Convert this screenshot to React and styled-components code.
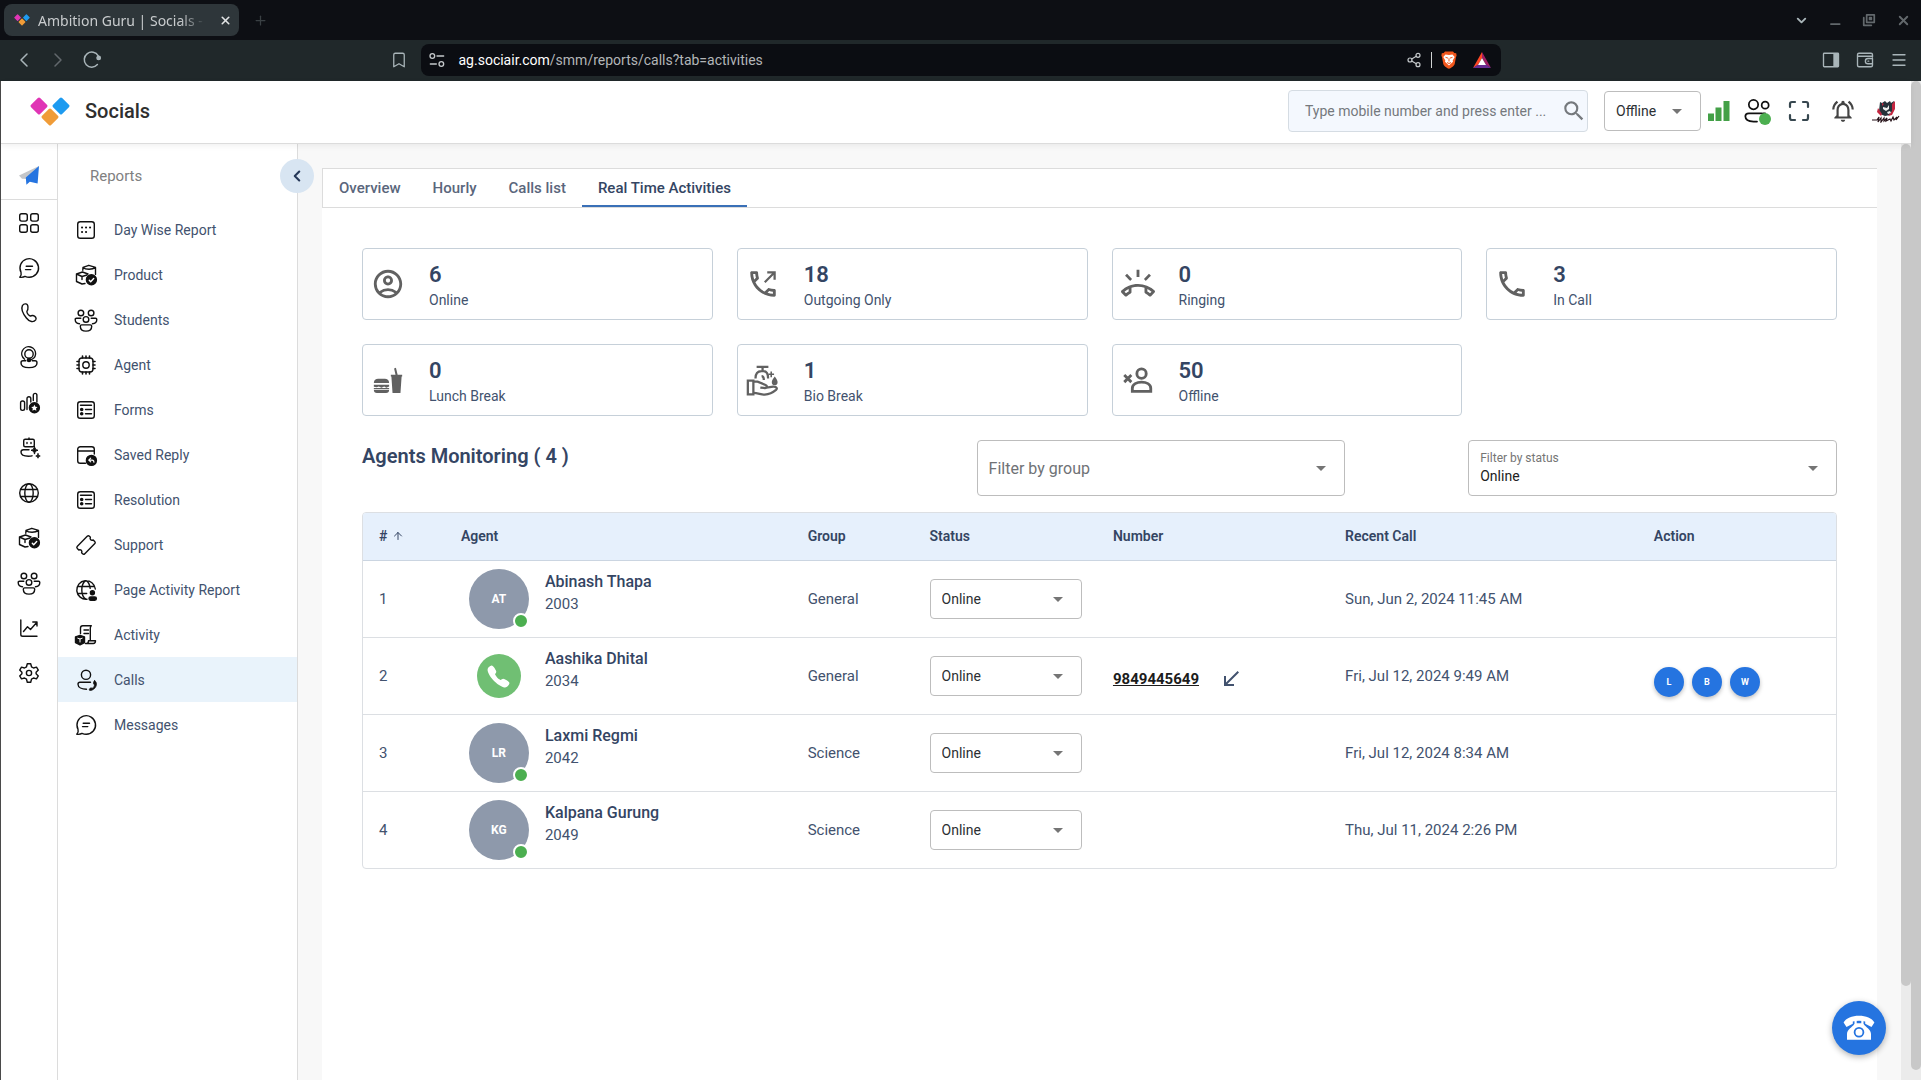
import React from "react";
import styled, { createGlobalStyle, css } from "styled-components";
import {
  MdArrowDropDown,
  MdSearch,
  MdOutlineAccountCircle,
  MdOutlineRingVolume,
  MdOutlinePhone,
  MdOutlineNotificationsActive,
  MdCallReceived,
} from "react-icons/md";
import { IoCall } from "react-icons/io5";
import {
  ChevronLeft,
  ChevronRight,
  ChevronDown,
  Bookmark,
  Share2,
  Menu,
  Plus,
  X,
  Maximize,
  ArrowUp,
} from "lucide-react";

const Line = ({ size = 24, width = 1.4, children }) => (
  <svg
    width={size}
    height={size}
    viewBox="0 0 24 24"
    fill="none"
    stroke="currentColor"
    strokeWidth={width}
    strokeLinecap="round"
    strokeLinejoin="round"
    aria-hidden="true"
  >
    {children}
  </svg>
);

const Logo = ({ width }) => (
  <svg width={width} viewBox="0 0 40 29" aria-hidden="true">
    <rect x="2.6" y="2.6" width="12.8" height="12.8" rx="1.6" fill="#e035b5" transform="rotate(45 9 9)" />
    <rect x="24.6" y="2.6" width="12.8" height="12.8" rx="1.6" fill="#1e9bf0" transform="rotate(45 31 9)" />
    <rect x="13.6" y="13.6" width="12.8" height="12.8" rx="1.6" fill="#f09c38" transform="rotate(45 20 20)" />
  </svg>
);

const PlaneIcon = () => (
  <svg width="24" height="24" viewBox="0 0 24 24" aria-hidden="true">
    <path d="M22 2 2 11.5l3 3.2 5.5.3z" fill="#c4c6c9" />
    <path d="M22 2 8.8 13.6l.6 7.2 3.4-3 7.8 1.6z" fill="#2574e0" />
  </svg>
);

const GridIcon = () => (
  <Line>
    <rect x="2.7" y="2.7" width="7.6" height="7.4" rx="2" />
    <rect x="13.7" y="2.7" width="7.6" height="7.4" rx="2" />
    <rect x="2.7" y="13.7" width="7.6" height="7.6" rx="2" />
    <rect x="13.7" y="13.7" width="7.6" height="7.6" rx="2" />
  </Line>
);

const ChatIcon = () => (
  <Line>
    <path d="M12.2 21.3a9.3 9.3 0 1 0-8.2-5c.5 1.6.2 3.3-1.2 5 2.6.2 4.4-.3 5.2-.9 1.4.6 2.7.9 4.2.9z" />
    <path d="M9.2 10.2h6.3M8.5 13.6h5.3" />
  </Line>
);

const PhoneIcon = () => (
  <Line>
    <path d="M5.4 4.6c1.7-2.5 5.3-2.3 5.5.9.1 2.2.3 3.2-.7 4.200-1 1.200.6 3.900 2.300 5 1.200.8 1.900-.5 3.400-.2 2.500.6 3.900 2.600 2.800 4.300-2 2.900-6.300 2.200-9.300-1.800C6 12.700 3.700 8.200 5.400 4.600z" />
  </Line>
);

const SupportAgentIcon = () => (
  <Line>
    <circle cx="12" cy="8" r="4.2" />
    <path d="M7.6 13.2a6.900 6.900 0 1 1 10.900-4.700c-.3 2.600-2.100 4.600-5 5.200" />
    <circle cx="12" cy="14" r="1.6" fill="currentColor" />
    <path d="M8.8 14.8H6c-1.300 0-2 .8-2 2.100 0 2.900 3.300 4.700 8 4.700s8-1.800 8-4.700c0-1.300-.7-2.100-2-2.100h-2.800" />
  </Line>
);

const StatsStarIcon = () => (
  <Line>
    <rect x="3.6" y="10" width="4" height="9.4" rx="1.8" />
    <path d="M10 18.5V7.6a1.900 1.900 0 0 1 3.800 0V11M16.300 9.500V4.200a1.800 1.800 0 0 1 3.600 0V11" />
    <circle cx="17.4" cy="16.8" r="5" fill="currentColor" />
    <path d="m17.4 13.8 1 2 2.200.3-1.600 1.500.4 2.200-2-1-2 1 .4-2.200-1.600-1.500 2.200-.3z" fill="#fff" stroke="none" />
  </Line>
);

const RobotIcon = () => (
  <Line>
    <path d="M12 2v1.500" />
    <rect x="6.7" y="3.2" width="10.6" height="7.6" rx="1.5" />
    <path d="M10 6.500v1M14 6.500v1" />
    <path d="M12 13.700H6.500c-1.600 0-2.500.9-2.500 2.300 0 2.600 3 4.200 7.500 4.200 1.200 0 2.500-.1 3.500-.4" />
    <path d="M17.500 10.500c.5 2.500 1.300 3.300 3.500 3.800-2.200.5-3 1.300-3.500 3.800-.5-2.500-1.300-3.300-3.500-3.800 2.200-.5 3-1.300 3.500-3.800zM21 17.800c.3 1.400.8 1.900 2.200 2.200-1.400.3-1.900.8-2.200 2.200-.3-1.400-.8-1.900-2.200-2.200 1.400-.3 1.900-.8 2.200-2.200z" fill="currentColor" strokeWidth="1" />
  </Line>
);

const GlobeIcon = () => (
  <Line>
    <circle cx="12" cy="12" r="9.3" />
    <ellipse cx="12" cy="12" rx="4.2" ry="9.3" />
    <path d="M3.700 8.500h16.600M3.700 15.500h16.600" />
  </Line>
);

const BoxesIcon = () => (
  <Line>
    <path d="m8.800 7.200.2-2.800 5.800-2.100 6.700 2.100v7M9 4.400c2.500 2.500 9.500 2.500 12.500 0M2.500 11l6-2 5.500 2M2.500 11v7.500L8 21l3-.5M2.500 11 8 13.500l5-1.500M8 13.500v3" />
    <circle cx="17.4" cy="16.8" r="5" fill="currentColor" />
    <path d="m15.300 17.200 1.400 1.500 3-3.200" stroke="#fff" />
  </Line>
);

const PeopleIcon = () => (
  <Line>
    <circle cx="6.9" cy="5" r="2.8" />
    <circle cx="17.1" cy="5" r="2.8" />
    <circle cx="12" cy="11.4" r="2.8" />
    <path d="M6.800 10.200H2.500c-.9 0-1.300.5-1.300 1.200 0 2.400 1.500 4 4.300 4.300M17.200 10.200h4.300c.9 0 1.300.5 1.300 1.200 0 2.400-1.500 4-4.300 4.300M7.600 16.900h8.800c1 0 1.300.5 1.300 1.300 0 3-2.300 4.900-5.700 4.900s-5.700-1.900-5.700-4.900c0-.8.300-1.300 1.300-1.300z" />
  </Line>
);

const TrendIcon = () => (
  <Line>
    <path d="M3.800 4v14.400c0 1.200.6 1.800 1.800 1.800H20M6.500 15.500l4-4.800 3 2.800 6.200-7M15.800 6h4.200v4" />
  </Line>
);

const GearIcon = () => (
  <Line>
    <circle cx="12" cy="12" r="2.6" />
    <path d="M10.300 2.800h3.400l.8 3 2 1.200 3-.9 1.800 3-2.200 2.200v1.400l2.200 2.200-1.800 3-3-.9-2 1.200-.8 3h-3.400l-.8-3-2-1.200-3 .9-1.800-3 2.200-2.200v-1.400L2.700 9.100l1.800-3 3 .9 2-1.200z" />
  </Line>
);

const CalendarIcon = () => (
  <Line>
    <rect x="3.7" y="3.7" width="16.6" height="16.6" rx="2.6" />
    <path d="M8 9.500h.1M12 9.500h.1M16 9.500h.1M8 14h.1M12 14h.1" strokeWidth="2" />
  </Line>
);

const ChipIcon = () => (
  <Line>
    <rect x="5" y="5" width="14" height="14" rx="3" />
    <circle cx="12" cy="12" r="3.2" />
    <path d="M8.500 5V3M12 5V3M15.500 5V3M8.500 21v-2M12 21v-2M15.500 21v-2M5 8.500H3M5 12H3M5 15.500H3M21 8.500h-2M21 12h-2M21 15.500h-2" strokeWidth="1.6" />
  </Line>
);

const FormIcon = () => (
  <Line>
    <rect x="3.7" y="3.7" width="16.6" height="16.6" rx="2.6" />
    <path d="M6.500 7.200h11M11.500 11.500h6M11.500 15.800h6" />
    <circle cx="7.7" cy="11.5" r="1.1" fill="currentColor" />
    <circle cx="7.7" cy="15.8" r="1.1" fill="currentColor" />
  </Line>
);

const SavedReplyIcon = () => (
  <Line>
    <path d="M11.500 20.300H6.300a2.600 2.600 0 0 1-2.600-2.600V6.300a2.600 2.600 0 0 1 2.600-2.600h11.400a2.600 2.600 0 0 1 2.600 2.600V11M3.700 8h16.600" />
    <circle cx="17.4" cy="17.4" r="5" fill="currentColor" />
    <path d="m16.700 15.200-2 1.900 2 1.700M15 17.100h3.200c1.300 0 1.700.8 1.700 2.200" stroke="#fff" strokeWidth="1.1" />
  </Line>
);

const TicketIcon = () => (
  <Line>
    <path d="M13.200 3.300c.8-.8 1.500-.8 2.200-.1l1 1c-.5 1-.3 1.900.3 2.500s1.500.8 2.500.3l1.500 1.600c.7.700.7 1.400-.1 2.200l-9.800 9.900c-.8.800-1.500.8-2.200.1l-1-1c.5-1 .3-1.900-.3-2.500s-1.500-.8-2.500-.3l-1.500-1.500c-.7-.7-.7-1.400.1-2.200z" />
  </Line>
);

const PageActivityIcon = () => (
  <Line>
    <path d="M13 21.200A9.300 9.300 0 1 1 21.300 11M12 21.300c-2.400-1.300-4.200-5-4.200-9.300s1.800-8 4.200-9.300c2.200 1.200 3.800 4 4.200 7.600M3.700 8.500h16.600M3.700 15.500h9" />
    <circle cx="18.4" cy="14.8" r="2" fill="currentColor" />
    <rect x="15" y="19" width="7.4" height="3.2" rx="1.6" fill="currentColor" />
  </Line>
);

const ActivityIcon = () => (
  <Line>
    <path d="M6.500 10.500V5c0-1.500.7-2.300 2.200-2.300h8.600c-.8.700-1 1.300-1 2.500v12.600M10 7h4.500M10 10.500h4.500M11.500 20.500h7.800c1.500 0 2.200-.8 2.200-2.700h-7c0 1.700-.8 2.700-2 2.700" />
    <path d="m6 12.300 4.500 1.600v5.700L6 21.800l-4.500-2.200v-5.700z" fill="currentColor" />
    <path d="m3.800 15.200 2.200.8 2.200-.8M6 16v3" stroke="#fff" strokeWidth="1" />
  </Line>
);

const CallsIcon = () => (
  <Line>
    <circle cx="12" cy="6.8" r="4.6" />
    <path d="M16.500 14.300H6c-1.500 0-2 .8-2 2 0 3.200 4 5 8.500 5" />
    <path d="M20.500 12.700c2.500 1.200 2.500 4.600.6 7-1.800 2.300-4.200 3.100-5.700 2.500-.4-.8.400-2.200 1.500-2.300l1.500.3c1.200-.7 2-2 2.100-3.300l-.9-1.100c-.3-1 .1-2.500.9-3.100z" fill="currentColor" strokeWidth=".8" />
  </Line>
);

/* solid grey status icons */
const OutgoingIcon = () => (
  <svg width="34" height="34" viewBox="0 0 24 24" fill="currentColor" aria-hidden="true">
    <path d="M6.54 5c.06.89.21 1.76.45 2.59l-1.2 1.2c-.41-1.2-.67-2.47-.76-3.79h1.51m9.86 12.02c.85.24 1.72.39 2.6.45v1.49c-1.32-.09-2.59-.35-3.8-.75l1.2-1.19M7.5 3H4c-.55 0-1 .45-1 1 0 9.39 7.61 17 17 17 .55 0 1-.45 1-1v-3.49c0-.55-.45-1-1-1-1.24 0-2.45-.2-3.57-.57-.1-.04-.21-.05-.31-.05-.26 0-.51.1-.71.29l-2.2 2.2c-2.83-1.45-5.15-3.76-6.59-6.59l2.2-2.2c.28-.28.36-.67.25-1.02C8.7 6.45 8.5 5.25 8.5 4c0-.55-.45-1-1-1z" />
    <path d="M15 3h6v6h-1.6V5.700l-5.600 5.600-1.100-1.100 5.600-5.600H15z" />
  </svg>
);

const LunchIcon = () => (
  <svg width="34" height="34" viewBox="0 0 24 24" fill="currentColor" aria-hidden="true">
    <path d="M2 14.200c0-2.200 1.400-3 3-3h4.800c1.600 0 3 .8 3 3zM2 18.900h10.800c0 1.600-.8 2.300-2.200 2.300H4.200c-1.400 0-2.200-.7-2.200-2.300z" />
    <path d="M2 15.300h10.800v1.200l-2 .9-1.500-.8-1.900.8-1.900-.8-1.500.6-2-.5zM2 17.600h10.800v.8H2z" />
    <path d="M14 8.300h3.300l-1-4.400 1.300-.5 1.200 4.900H22v1.300h-.4l-.8 11.600h-5.600l-.8-11.600H14z" />
  </svg>
);

const WashIcon = () => (
  <svg width="34" height="34" viewBox="0 0 24 24" fill="none" stroke="currentColor" strokeWidth="1.6" aria-hidden="true">
    <path d="M1.300 12.500h3.900v9.700H1.300z" />
    <path d="M5.200 13.200h3l5.600 2.300c1.500.6 1 2.300-.5 2.200l-3.200-.4M13.300 17.600l5.900-.9c2.200-.2 3.200 1.200 2 2.300-2 1.700-5.500 3.200-8 3.400-2.500 0-5-1.300-8-1.300" />
    <path d="M7.500 2.800h8.300M11.700 2.800v2.700M6.700 11c0-3.300 1.700-5.200 4.200-5.200h1.500c2.200 0 3.200 1.700 3.200 5.200M12.600 12c0-2-.5-2.800-1.600-2.800" />
    <path d="M20.300 9.500c1.400 1.900 2 2.800 2 4a2 2 0 0 1-4.100 0c0-1.200.7-2.100 2.100-4z" fill="currentColor" stroke="none" />
    <path d="M17.800 6v4M15.800 8h4" strokeWidth="1.1" />
  </svg>
);

const OfflineIcon = () => (
  <svg width="34" height="34" viewBox="0 0 24 24" fill="none" stroke="currentColor" strokeWidth="2" aria-hidden="true">
    <circle cx="14.5" cy="7.5" r="3.3" />
    <path d="M8 20v-2.200c0-2.900 3.200-4.300 6.500-4.300s6.500 1.400 6.500 4.300V20z" />
    <path d="m2.300 8.500 5 5M7.300 8.500l-5 5" />
  </svg>
);

const DeskPhoneIcon = () => (
  <svg width="32" height="32" viewBox="0 0 32 32" fill="#fff" aria-hidden="true">
    <path d="M.6 10.500C3 6.200 9 3.800 16 3.800s13 2.400 15.400 6.700L28.500 15l-6.300-3.200V9.500c-3.700-1-8.700-1-12.400 0v2.300L3.500 15z" />
    <path d="M11.500 8.500h2.200v2.700h4.600V8.500h2.200v3.200c2.400 4 7.500 5.500 7.500 10.300v5.800H4V22c0-4.800 5.100-6.300 7.500-10.300z" />
    <circle cx="16" cy="20.3" r="4.4" fill="none" stroke="#2574e0" strokeWidth="1.8" />
  </svg>
);

const TeamIcon = () => (
  <Line size={28} width={1.5}>
    <circle cx="9" cy="6.5" r="4" />
    <circle cx="19" cy="7" r="3" />
    <path d="M16 14H5c-1.700 0-3 .9-3 2.600C2 19.500 5 21 9 21h3M17 14h2" />
  </Line>
);

const SignalIcon = () => (
  <svg width="24" height="24" viewBox="0 0 24 24" fill="#43a047" aria-hidden="true">
    <path d="M1 14.500h6V22H1zM8.500 8.500h6V22h-6zM16.500 2h6v20h-6z" />
  </svg>
);

const BrandMark = () => (
  <svg width="30" height="24" viewBox="0 0 30 24" aria-hidden="true">
    <path d="M9 3l2 1 3-2 2 2 3-2 1 2 3-2-1 9-3 5-5 1-5-2-1-3z" fill="#26323a" />
    <path d="m7 9 4 6-1 2-4-4zM21 5l3-3v8l-3 6-4 1 4-5zM11 4l2 1-2 2z" fill="#c32640" />
    <path d="m12 8 4 1 2-3v4l-3 2-3-2z" fill="#eee" />
    <path d="m16 13 3-1 1 2-3 1z" fill="#eee" />
    <path d="M1 21h5l2-3-1 5 3-4v4l3-4v3l3-3-1 3 4-2 1 2 2-4 1 3 3-3-1 3 3-4" fill="none" stroke="#27131a" strokeWidth="1.2" />
  </svg>
);

const BraveIcon = () => (
  <svg width="16" height="18" viewBox="0 0 16 18" aria-hidden="true">
    <path d="M4 .5h8l1.300 1.400 1.900.3.400 2.300-.7 2-1.200 6.500c-.3 1.500-3.300 4-5.700 4.800-2.400-.8-5.400-3.300-5.700-4.800L1.100 6.500l-.7-2 .4-2.300 1.900-.3z" fill="#f1571d" />
    <path d="m4.500 3.500 3.500.6 3.500-.6L13.700 6l-2 3.500.3 1.300-4 3.800-4-3.800.3-1.300-2-3.500z" fill="#fff" />
    <path d="m4.500 6.300 2.700.9M11.500 6.300l-2.700.9M8 7.500v3M6 11.500l2 1 2-1" stroke="#f1571d" fill="none" />
  </svg>
);

const BatIcon = () => (
  <svg width="18" height="16" viewBox="0 0 18 16" aria-hidden="true">
    <path d="M9 0 0 16l5-3 4-7z" fill="#ff4724" />
    <path d="M9 0l9 16-5-3-4-7z" fill="#9e1f63" />
    <path d="M0 16h18l-5-3.500H5z" fill="#662d91" />
    <path d="m9 6 4 7H5z" fill="#fff" />
  </svg>
);

const ReloadIcon = () => (
  <Line size={20} width={1.8}>
    <path d="M18.500 17.500a9 9 0 1 1 1-10.500" />
    <circle cx="20" cy="9.5" r="2" fill="currentColor" />
  </Line>
);

const SiteSettingsIcon = () => (
  <Line size={16} width={2}>
    <circle cx="5" cy="6" r="3.5" />
    <path d="M12 6h10M2 18h9" />
    <circle cx="18.5" cy="18" r="3.5" />
  </Line>
);

const PanelIcon = () => (
  <Line size={18} width={1.8}>
    <rect x="2" y="3" width="20" height="18" rx="1" />
    <path d="M16 4h5v16h-5z" fill="currentColor" />
  </Line>
);

const WalletIcon = () => (
  <Line size={18} width={1.8}>
    <path d="M22 8V5c0-1.200-.8-2-2-2H4c-1.200 0-2 .8-2 2v14c0 1.200.8 2 2 2h16c1.200 0 2-.8 2-2v-2M2 7h20M22 10h-6a3.500 3.500 0 0 0 0 7h6zM16 13.500h1" />
  </Line>
);

const RestoreIcon = () => (
  <Line size={14} width={3}>
    <path d="M8 3h13v13H8zM3 8v13h13M13 8h3v3h-3z" />
  </Line>
);

const railItems = [
  ["Dashboard", GridIcon],
  ["Conversations", ChatIcon],
  ["Phone", PhoneIcon],
  ["Agents", SupportAgentIcon],
  ["Statistics", StatsStarIcon],
  ["Bots", RobotIcon],
  ["Web", GlobeIcon],
  ["Products", BoxesIcon],
  ["People", PeopleIcon],
  ["Trends", TrendIcon],
  ["Settings", GearIcon],
];

const menuItems = [
  ["Day Wise Report", CalendarIcon],
  ["Product", BoxesIcon],
  ["Students", PeopleIcon],
  ["Agent", ChipIcon],
  ["Forms", FormIcon],
  ["Saved Reply", SavedReplyIcon],
  ["Resolution", FormIcon],
  ["Support", TicketIcon],
  ["Page Activity Report", PageActivityIcon],
  ["Activity", ActivityIcon],
  ["Calls", CallsIcon],
  ["Messages", ChatIcon],
];

const tabs = ["Overview", "Hourly", "Calls list", "Real Time Activities"];

const stats = [
  [6, "Online", <MdOutlineAccountCircle size={34} />],
  [18, "Outgoing Only", <OutgoingIcon />],
  [0, "Ringing", <MdOutlineRingVolume size={34} />],
  [3, "In Call", <MdOutlinePhone size={34} />],
  [0, "Lunch Break", <LunchIcon />],
  [1, "Bio Break", <WashIcon />],
  [50, "Offline", <OfflineIcon />],
];

const agents = [
  { name: "Abinash Thapa", ext: "2003", initials: "AT", group: "General", recent: "Sun, Jun 2, 2024 11:45 AM" },
  { name: "Aashika Dhital", ext: "2034", calling: true, number: "9849445649", group: "General", recent: "Fri, Jul 12, 2024 9:49 AM" },
  { name: "Laxmi Regmi", ext: "2042", initials: "LR", group: "Science", recent: "Fri, Jul 12, 2024 8:34 AM" },
  { name: "Kalpana Gurung", ext: "2049", initials: "KG", group: "Science", recent: "Thu, Jul 11, 2024 2:26 PM" },
];

const StatusSelect = ({ value, label, wide }) => (
  <SelectWrap $wide={wide}>
    <select aria-label={label} defaultValue={value}>
      <option>Online</option>
      <option>Offline</option>
    </select>
    <MdArrowDropDown size={24} />
  </SelectWrap>
);

const Browser = () => (
  <header>
    <TabStrip>
      <BrowserTab>
        <Logo width={16} />
        <TabTitle>Ambition Guru | Socials - </TabTitle>
        <ChromeButton aria-label="Close tab" $bright>
          <X size={13} strokeWidth={3} />
        </ChromeButton>
      </BrowserTab>
      <NewTabButton aria-label="New tab">
        <Plus size={15} />
      </NewTabButton>
      <WindowControls>
        <ChromeButton aria-label="Search tabs">
          <ChevronDown size={15} strokeWidth={3} />
        </ChromeButton>
        <ChromeButton aria-label="Minimize" $dim>
          <Line size={14} width={3}>
            <path d="M5 19h15" />
          </Line>
        </ChromeButton>
        <ChromeButton aria-label="Restore" $dim>
          <RestoreIcon />
        </ChromeButton>
        <ChromeButton aria-label="Close window" $dim>
          <X size={15} strokeWidth={3} />
        </ChromeButton>
      </WindowControls>
    </TabStrip>
    <Toolbar>
      <ToolGroup>
        <ChromeButton aria-label="Back">
          <ChevronLeft size={24} strokeWidth={1.5} />
        </ChromeButton>
        <ChromeButton aria-label="Forward" $dim>
          <ChevronRight size={24} strokeWidth={1.5} />
        </ChromeButton>
        <ChromeButton aria-label="Reload">
          <ReloadIcon />
        </ChromeButton>
        <BookmarkButton aria-label="Bookmark">
          <Bookmark size={18} strokeWidth={1.7} />
        </BookmarkButton>
      </ToolGroup>
      <AddressBar>
        <SiteSettingsIcon />
        <Url>
          <b>ag.sociair.com</b>/smm/reports/calls?tab=activities
        </Url>
        <AddressIcons>
          <Share2 size={16} strokeWidth={1.8} />
          <Divider />
          <BraveIcon />
          <BatIcon />
        </AddressIcons>
      </AddressBar>
      <ToolGroup $end>
        <ChromeButton aria-label="Side panel">
          <PanelIcon />
        </ChromeButton>
        <ChromeButton aria-label="Wallet">
          <WalletIcon />
        </ChromeButton>
        <ChromeButton aria-label="Menu">
          <Menu size={18} strokeWidth={1.7} />
        </ChromeButton>
      </ToolGroup>
    </Toolbar>
  </header>
);

const Header = () => (
  <TopBar>
    <Brand>
      <Logo width={40} />
      <h1>Socials</h1>
    </Brand>
    <Actions>
      <SearchBox>
        <input type="text" aria-label="Mobile number" placeholder="Type mobile number and press enter ..." />
        <MdSearch size={26} />
      </SearchBox>
      <Presence>
        <StatusSelect value="Offline" label="My status" />
        <SignalIcon />
      </Presence>
      <TeamButton aria-label="Team">
        <TeamIcon />
        <TeamDot />
      </TeamButton>
      <HeaderButton aria-label="Fullscreen">
        <Maximize size={24} strokeWidth={2.2} color="#37474f" />
      </HeaderButton>
      <HeaderButton aria-label="Notifications">
        <MdOutlineNotificationsActive size={26} color="#444" />
      </HeaderButton>
      <BrandMark />
    </Actions>
  </TopBar>
);

const AgentsTable = () => (
  <TableFrame>
    <Table>
      <colgroup>
        <col style={{ width: "5.56%" }} />
        <col style={{ width: "23.54%" }} />
        <col style={{ width: "8.28%" }} />
        <col style={{ width: "12.45%" }} />
        <col style={{ width: "15.76%" }} />
        <col style={{ width: "20.96%" }} />
        <col />
      </colgroup>
      <thead>
        <tr>
          <th>
            <SortLabel>
              # <ArrowUp size={12} />
            </SortLabel>
          </th>
          <th>Agent</th>
          <th>Group</th>
          <th>Status</th>
          <th>Number</th>
          <th>Recent Call</th>
          <th>Action</th>
        </tr>
      </thead>
      <tbody>
        {agents.map((agent, i) => (
          <tr key={agent.ext}>
            <td>{i + 1}</td>
            <td>
              <AgentCell>
                <AvatarSlot>
                  {agent.calling ? (
                    <CallAvatar>
                      <IoCall size={25} />
                    </CallAvatar>
                  ) : (
                    <Avatar>
                      {agent.initials}
                      <OnlineDot />
                    </Avatar>
                  )}
                </AvatarSlot>
                <AgentInfo>
                  <strong>{agent.name}</strong>
                  <span>{agent.ext}</span>
                </AgentInfo>
              </AgentCell>
            </td>
            <td>{agent.group}</td>
            <td>
              <StatusSelect value="Online" label={`${agent.name} status`} wide />
            </td>
            <td>
              {agent.number && (
                <NumberCell>
                  <a href={`tel:${agent.number}`}>{agent.number}</a>
                  <MdCallReceived size={24} />
                </NumberCell>
              )}
            </td>
            <td>{agent.recent}</td>
            <td>
              {agent.calling && (
                <ActionCell>
                  <RoundButton aria-label="Listen">L</RoundButton>
                  <RoundButton aria-label="Barge">B</RoundButton>
                  <RoundButton aria-label="Whisper">W</RoundButton>
                </ActionCell>
              )}
            </td>
          </tr>
        ))}
      </tbody>
    </Table>
  </TableFrame>
);

const App = () => {
  return (
    <Root>
      <GlobalStyle />
      <Browser />
      <Viewport>
        <Site>
          <Header />
          <Body>
            <Rail aria-label="Modules">
              <RailTop href="#home" aria-label="Home">
                <PlaneIcon />
              </RailTop>
              {railItems.map(([label, Icon]) => (
                <RailLink key={label} href="#module" aria-label={label}>
                  <Icon />
                </RailLink>
              ))}
            </Rail>
            <Sidebar aria-label="Reports">
              <SidebarHead>
                Reports
                <Collapse aria-label="Collapse menu">
                  <ChevronLeft size={18} strokeWidth={2.8} />
                </Collapse>
              </SidebarHead>
              {menuItems.map(([label, Icon]) => (
                <MenuLink key={label} href="#report" $active={label === "Calls"}>
                  <Icon />
                  <span>{label}</span>
                </MenuLink>
              ))}
            </Sidebar>
            <Main>
              <Panel>
                <Tabs role="tablist">
                  {tabs.map((tab, i) => (
                    <Tab key={tab} role="tab" aria-selected={i === 3} $active={i === 3}>
                      {tab}
                    </Tab>
                  ))}
                </Tabs>
                <Content>
                  <Cards>
                    {stats.map(([count, label, icon]) => (
                      <Card key={label}>
                        {icon}
                        <div>
                          <strong>{count}</strong>
                          <span>{label}</span>
                        </div>
                      </Card>
                    ))}
                  </Cards>
                  <Filters>
                    <h2>Agents Monitoring ( 4 )</h2>
                    <Filter $empty>
                      <select aria-label="Filter by group" defaultValue="">
                        <option value="">Filter by group</option>
                        <option>General</option>
                        <option>Science</option>
                      </select>
                      <MdArrowDropDown size={24} />
                    </Filter>
                    <Filter $last>
                      <label htmlFor="status-filter">Filter by status</label>
                      <select id="status-filter" defaultValue="Online">
                        <option>Online</option>
                        <option>Offline</option>
                      </select>
                      <MdArrowDropDown size={24} />
                    </Filter>
                  </Filters>
                  <AgentsTable />
                </Content>
              </Panel>
            </Main>
            <Track>
              <Thumb $length="90%" />
            </Track>
          </Body>
        </Site>
        <Track>
          <Thumb $length="99%" />
        </Track>
      </Viewport>
      <CallButton aria-label="Open dialer">
        <DeskPhoneIcon />
      </CallButton>
    </Root>
  );
};

const GlobalStyle = createGlobalStyle`
  * {
    box-sizing: border-box;
  }
  body {
    margin: 0;
    font-family: Roboto, "Noto Sans", sans-serif;
    font-size: 14px;
    color: #42526e;
    background: #fff;
  }
  button, input, select {
    font-family: inherit;
  }
  button {
    padding: 0;
    border: 0;
    background: none;
    cursor: pointer;
  }
  h1, h2 {
    margin: 0;
  }
  svg {
    flex: none;
    display: block;
  }
`;

const Root = styled.div`
  display: flex;
  flex-direction: column;
  height: 100vh;
  overflow: hidden;
`;

const TabStrip = styled.div`
  display: flex;
  align-items: center;
  gap: 9px;
  height: 40px;
  padding: 0 6px 0 4px;
  background: #0d0f14;
`;

const BrowserTab = styled.div`
  display: flex;
  align-items: center;
  gap: 8px;
  width: 235px;
  height: 32px;
  padding: 0 2px 0 10px;
  border-radius: 8px;
  background: #2e363a;
  color: #c9ccce;
`;

const TabTitle = styled.span`
  flex: 1;
  overflow: hidden;
  white-space: nowrap;
  font-family: "Noto Sans", sans-serif;
  font-size: 14px;
  mask-image: linear-gradient(90deg, #000 85%, transparent);
`;

const ChromeButton = styled.button`
  display: flex;
  align-items: center;
  justify-content: center;
  width: 24px;
  height: 24px;
  color: ${(p) => (p.$bright ? "#e2e4e5" : p.$dim ? "#62686c" : "#a9b5b9")};
`;

const NewTabButton = styled(ChromeButton)`
  color: #3a4044;
`;

const BookmarkButton = styled(ChromeButton)`
  margin-left: auto;
`;

const WindowControls = styled.div`
  display: flex;
  gap: 10px;
  margin-left: auto;
`;

const Toolbar = styled.div`
  display: grid;
  grid-template-columns: 1fr minmax(0, 1080px) 1fr;
  align-items: center;
  height: 41px;
  padding-bottom: 1px;
  background: #20282a;
`;

const ToolGroup = styled.div`
  display: flex;
  gap: 10px;
  padding: 0 10px 0 12px;
  justify-content: ${(p) => (p.$end ? "flex-end" : "flex-start")};
`;

const AddressBar = styled.div`
  display: flex;
  align-items: center;
  gap: 14px;
  height: 32px;
  padding: 0 10px 0 8px;
  border-radius: 8px;
  background: #0b0d12;
  color: #c5c9cb;
`;

const Url = styled.span`
  flex: 1;
  font-size: 14px;
  color: #b3b6b8;

  b {
    font-weight: 400;
    color: #fff;
  }
`;

const AddressIcons = styled.div`
  display: flex;
  align-items: center;
  gap: 16px;
`;

const Divider = styled.i`
  width: 1px;
  height: 16px;
  margin: 0 -7px;
  background: #d0d3d4;
`;

const Viewport = styled.div`
  display: flex;
  flex: 1;
  min-height: 0;
  border-left: 1px solid #4a4a4a;
`;

const Site = styled.div`
  display: flex;
  flex-direction: column;
  flex: 1;
  min-width: 0;
`;

const Track = styled.div`
  flex: none;
  width: 10px;
  background: #ebebeb;
`;

const Thumb = styled.div`
  height: ${(p) => p.$length};
  border-radius: 5px;
  background: #c8c8c8;
`;

const TopBar = styled.div`
  position: relative;
  z-index: 1;
  display: flex;
  align-items: center;
  justify-content: space-between;
  height: 63px;
  padding: 0 10px 2px 29px;
  border-bottom: 1px solid #dcdcdc;
  background: #fff;
  box-shadow: 0 2px 6px rgba(0, 0, 0, 0.06);
`;

const Brand = styled.div`
  display: flex;
  align-items: center;
  gap: 15px;

  h1 {
    font-size: 20px;
    font-weight: 500;
    color: #2f2f2f;
  }
`;

const Actions = styled.div`
  display: flex;
  align-items: center;
  gap: 12px;
`;

const SearchBox = styled.div`
  display: flex;
  align-items: center;
  width: 300px;
  height: 42px;
  margin-right: 4px;
  border: 1px solid #d5dce3;
  border-radius: 4px;
  background: #f4f8fe;
  color: #75797d;

  input {
    flex: 1;
    min-width: 0;
    padding: 0 0 0 16px;
    border: 0;
    outline: 0;
    background: none;
    font-size: 14px;
  }
  input::placeholder {
    color: #75797d;
  }
`;

const Presence = styled.div`
  display: flex;
  align-items: center;
  gap: 6px;
`;

const HeaderButton = styled.button`
  display: flex;
  align-items: center;
  justify-content: center;
  width: 32px;
  height: 32px;
`;

const TeamButton = styled(HeaderButton)`
  position: relative;
  width: 28px;
  color: #111;
`;

const TeamDot = styled.i`
  position: absolute;
  right: 0;
  bottom: 2px;
  width: 12px;
  height: 12px;
  border-radius: 50%;
  background: #4caf50;
`;

const SelectWrap = styled.div`
  position: relative;
  width: ${(p) => (p.$wide ? "152px" : "97px")};
  color: #757575;

  select {
    width: 100%;
    height: 40px;
    padding: 0 11px;
    border: 1px solid #bdbdbd;
    border-radius: 4px;
    appearance: none;
    background: #fff;
    color: #2c2f33;
    font-size: 14px;
  }
  svg {
    position: absolute;
    top: 8px;
    right: 12px;
    pointer-events: none;
  }
`;

const Body = styled.div`
  display: flex;
  flex: 1;
  min-height: 0;
`;

const Rail = styled.nav`
  flex: none;
  width: 57px;
  border-right: 1px solid #dcdcdc;
  background: #fff;
`;

const RailLink = styled.a`
  display: flex;
  align-items: center;
  justify-content: center;
  height: 45px;
  color: #111;
`;

const RailTop = styled(RailLink)`
  height: 56px;
  padding-top: 8px;
  border-bottom: 1px solid #dcdcdc;
`;

const Sidebar = styled.nav`
  flex: none;
  width: 240px;
  border-right: 1px solid #dcdcdc;
  background: #fff;
`;

const SidebarHead = styled.div`
  position: relative;
  display: flex;
  align-items: center;
  height: 63px;
  padding-left: 32px;
  font-size: 15px;
  color: #808080;
`;

const Collapse = styled.button`
  position: absolute;
  z-index: 1;
  top: 15px;
  right: -17px;
  display: flex;
  align-items: center;
  justify-content: center;
  width: 34px;
  height: 34px;
  border-radius: 50%;
  background: #d8e5f2;
  color: #263859;
`;

const MenuLink = styled.a`
  display: flex;
  align-items: center;
  gap: 16px;
  height: 45px;
  padding-left: 16px;
  color: #111;
  text-decoration: none;
  background: ${(p) => (p.$active ? "#e9f3fb" : "transparent")};

  span {
    color: #42526e;
  }
`;

const Main = styled.main`
  flex: 1;
  min-width: 0;
  padding: 24px 24px 0;
  background: #f8f8f8;
`;

const Panel = styled.div`
  height: 100%;
  background: #fff;
`;

const Tabs = styled.div`
  display: flex;
  height: 40px;
  border: 1px solid #dcdcdc;
  border-right: 0;
`;

const Tab = styled.button`
  padding: 0 16px;
  font-size: 15px;
  font-weight: 500;
  color: #5a667c;
  ${(p) =>
    p.$active &&
    css`
      color: #344563;
      box-shadow: inset 0 -2px #3a70b7;
    `}
`;

const Content = styled.div`
  padding: 40px;
`;

const Cards = styled.div`
  display: grid;
  grid-template-columns: repeat(4, minmax(0, 1fr));
  gap: 24px;
`;

const Card = styled.div`
  display: flex;
  align-items: center;
  gap: 24px;
  height: 72px;
  padding: 0 8px;
  border: 1px solid #c6d0d9;
  border-radius: 4px;
  color: #616161;

  div {
    display: flex;
    flex-direction: column;
    padding-top: 3px;
    color: #42526e;
  }
  strong {
    font-size: 22px;
    line-height: 28px;
    font-weight: 600;
    color: #344563;
  }
  span {
    line-height: 22px;
  }
`;

const Filters = styled.div`
  display: grid;
  grid-template-columns: repeat(12, minmax(0, 1fr));
  margin: 24px 0 16px;

  h2 {
    grid-column: 1 / 5;
    font-size: 20px;
    line-height: 32px;
    font-weight: 600;
    color: #344563;
  }
`;

const Filter = styled.div`
  position: relative;
  grid-column: ${(p) => (p.$last ? "10 / 13" : "6 / 9")};
  height: 56px;
  border: 1px solid #bdbdbd;
  border-radius: 4px;
  color: #757575;

  label {
    display: block;
    padding: 9px 11px 0;
    font-size: 12px;
    line-height: 16px;
  }
  select {
    width: 100%;
    height: ${(p) => (p.$empty ? "54px" : "20px")};
    padding: 0 11px;
    border: 0;
    appearance: none;
    background: none;
    font-size: ${(p) => (p.$empty ? "16px" : "14px")};
    color: ${(p) => (p.$empty ? "#6f7276" : "#222")};
  }
  svg {
    position: absolute;
    top: 15px;
    right: 11px;
    pointer-events: none;
  }
`;

const TableFrame = styled.div`
  overflow: hidden;
  border: 1px solid #dcdfe3;
  border-radius: 4px;
`;

const Table = styled.table`
  width: 100%;
  table-layout: fixed;
  border-spacing: 0;
  font-size: 15px;

  th {
    height: 48px;
    padding: 0 16px 2px;
    border-bottom: 1px solid #cbd5e1;
    background: #e6f0fc;
    text-align: left;
    font-size: 14px;
    font-weight: 600;
    color: #344563;
  }
  td {
    height: 77px;
    padding: 8px 16px;
    border-bottom: 1px solid #dcdfe3;
  }
  tr:last-child td {
    height: 76px;
    border-bottom: 0;
  }
`;

const SortLabel = styled.span`
  display: flex;
  align-items: center;
  gap: 5px;
`;

const AgentCell = styled.div`
  display: flex;
  gap: 16px;
  padding-left: 8px;
`;

const AvatarSlot = styled.div`
  display: flex;
  align-items: center;
  justify-content: center;
  width: 60px;
  height: 60px;
`;

const Avatar = styled.div`
  position: relative;
  width: 60px;
  border-radius: 50%;
  background: #8e99ab;
  color: #fff;
  font-size: 12px;
  line-height: 60px;
  font-weight: 700;
  text-align: center;
`;

const CallAvatar = styled.div`
  display: flex;
  align-items: center;
  justify-content: center;
  width: 44px;
  height: 44px;
  border-radius: 50%;
  background: #70bf73;
  color: #fff;
`;

const OnlineDot = styled.i`
  position: absolute;
  right: 0;
  bottom: 0;
  width: 16px;
  height: 16px;
  border: 2px solid #fff;
  border-radius: 50%;
  background: #4caf50;
`;

const AgentInfo = styled.div`
  display: flex;
  flex-direction: column;
  padding-top: 2px;
  line-height: 22px;

  strong {
    font-size: 16px;
    font-weight: 500;
    color: #344563;
  }
`;

const NumberCell = styled.div`
  display: flex;
  align-items: center;
  gap: 20px;
  padding-top: 6px;

  a {
    color: #1c1c1c;
    font-weight: 700;
  }
`;

const ActionCell = styled.div`
  display: flex;
  gap: 8px;
  padding-top: 12px;
`;

const RoundButton = styled.button`
  width: 30px;
  height: 30px;
  border-radius: 50%;
  background: #2574e0;
  box-shadow: 0 2px 4px rgba(0, 0, 0, 0.25);
  color: #fff;
  font-size: 9px;
  font-weight: 700;
`;

const CallButton = styled.button`
  position: fixed;
  right: 35px;
  bottom: 25px;
  z-index: 2;
  display: flex;
  align-items: center;
  justify-content: center;
  width: 54px;
  height: 54px;
  border-radius: 50%;
  background: #2574e0;
  box-shadow: 0 2px 6px rgba(0, 0, 0, 0.3);
`;

export default App;
